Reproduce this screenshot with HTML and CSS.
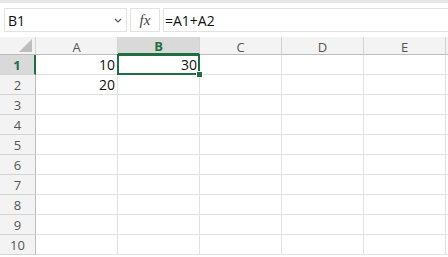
FILE: index.html
```html
<!DOCTYPE html>
<html lang="en">
<head>
  <meta charset="UTF-8" />
  <title>Sheet</title>
  <link rel="stylesheet" href="styles.css">
</head>
<body>
  <div class="formula-bar">
    <div class="name-box">
      <span>B1</span>
      <svg class="chevron" width="8" height="5" viewBox="0 0 8 5"><path d="M1 1l3 3 3-3" fill="none" stroke="#555" stroke-width="1.1"/></svg>
    </div>
    <div class="fx-box"><span class="fx">fx</span></div>
    <div class="formula-input">=A1+A2</div>
  </div>

  <div class="sheet">
    <div class="corner"><div class="triangle"></div></div>
    <div class="col-head">A</div>
    <div class="col-head active">B</div>
    <div class="col-head">C</div>
    <div class="col-head">D</div>
    <div class="col-head">E</div>
    <div class="col-head edge"></div>

    <div class="row-head active">1</div>
    <div class="cell num">10</div>
    <div class="cell num selected">30<span class="handle"></span></div>
    <div class="cell"></div><div class="cell"></div><div class="cell"></div><div class="cell edge"></div>

    <div class="row-head">2</div>
    <div class="cell num">20</div>
    <div class="cell"></div><div class="cell"></div><div class="cell"></div><div class="cell"></div><div class="cell edge"></div>

    <div class="row-head">3</div>
    <div class="cell"></div><div class="cell"></div><div class="cell"></div><div class="cell"></div><div class="cell"></div><div class="cell edge"></div>
    <div class="row-head">4</div>
    <div class="cell"></div><div class="cell"></div><div class="cell"></div><div class="cell"></div><div class="cell"></div><div class="cell edge"></div>
    <div class="row-head">5</div>
    <div class="cell"></div><div class="cell"></div><div class="cell"></div><div class="cell"></div><div class="cell"></div><div class="cell edge"></div>
    <div class="row-head">6</div>
    <div class="cell"></div><div class="cell"></div><div class="cell"></div><div class="cell"></div><div class="cell"></div><div class="cell edge"></div>
    <div class="row-head">7</div>
    <div class="cell"></div><div class="cell"></div><div class="cell"></div><div class="cell"></div><div class="cell"></div><div class="cell edge"></div>
    <div class="row-head">8</div>
    <div class="cell"></div><div class="cell"></div><div class="cell"></div><div class="cell"></div><div class="cell"></div><div class="cell edge"></div>
    <div class="row-head">9</div>
    <div class="cell"></div><div class="cell"></div><div class="cell"></div><div class="cell"></div><div class="cell"></div><div class="cell edge"></div>
    <div class="row-head">10</div>
    <div class="cell"></div><div class="cell"></div><div class="cell"></div><div class="cell"></div><div class="cell"></div><div class="cell edge"></div>
  </div>
</body>
</html>
```

FILE: styles.css
```css
body {
  margin: 0;
  width: 448px;
  height: 257px;
  overflow: hidden;
  background: #fff;
  font-family: 'Open Sans', 'Liberation Sans', sans-serif;
  color: #111;
}
.formula-bar {
  display: flex;
  gap: 3px;
  height: 37px;
  padding: 5px 0 0 4px;
  box-sizing: border-box;
  border-top: 3px solid #e8e8e8;
  align-items: flex-start;
}
.name-box, .fx-box, .formula-input {
  height: 24px;
  box-sizing: border-box;
  border: 1px solid #e2e2e2;
  background: #fff;
  display: flex;
  align-items: center;
  font-size: 14px;
}
.name-box {
  width: 123px;
  padding: 0 4px 0 3px;
  justify-content: space-between;
}
.fx-box {
  width: 30px;
  justify-content: center;
}
.fx {
  font-family: 'Liberation Serif', serif;
  font-style: italic;
  font-size: 15px;
  color: #444;
}
.formula-input {
  flex: 1;
  padding-left: 1px;
  border-right: none;
}
.sheet {
  display: grid;
  grid-template-columns: 36px repeat(5, 82px) 2px;
  grid-template-rows: 18px repeat(10, 20px);
}
.corner {
  background: #f3f3f3;
  border-right: 1px solid #d4d4d4;
  border-bottom: 1px solid #bdbdbd;
  position: relative;
}
.triangle {
  position: absolute;
  right: 3px;
  bottom: 2px;
  width: 0;
  height: 0;
  border-left: 13px solid transparent;
  border-bottom: 13px solid #bdbdbd;
}
.col-head {
  background: #f3f3f3;
  border-right: 1px solid #d4d4d4;
  border-bottom: 1px solid #bdbdbd;
  color: #555;
  font-size: 13px;
  display: flex;
  align-items: center;
  justify-content: center;
  padding-top: 2px;
  box-sizing: border-box;
}
.col-head.active {
  background: #d9d9d9;
  color: #1e6e42;
  font-weight: bold;
  border-bottom: 2px solid #1e6e42;
}
.row-head {
  background: #f3f3f3;
  border-right: 1px solid #bdbdbd;
  border-bottom: 1px solid #d4d4d4;
  color: #555;
  font-size: 13px;
  display: flex;
  align-items: center;
  justify-content: center;
}
.row-head.active {
  background: #d9d9d9;
  color: #1e6e42;
  font-weight: bold;
  border-right: 2px solid #1e6e42;
}
.cell {
  border-right: 1px solid #e1e1e1;
  border-bottom: 1px solid #e1e1e1;
  font-size: 14px;
  display: flex;
  align-items: center;
  justify-content: flex-end;
  padding-right: 2px;
}
.cell.edge, .col-head.edge {
  border-right: none;
  padding: 0;
}
.selected {
  position: relative;
}
.selected::after {
  content: "";
  position: absolute;
  left: -1px;
  top: -1px;
  right: -1px;
  bottom: -1px;
  border: 2px solid #1e6e42;
}
.handle {
  position: absolute;
  right: -4px;
  bottom: -4px;
  width: 5px;
  height: 5px;
  background: #1e6e42;
  border: 1px solid #fff;
  z-index: 1;
}
```
